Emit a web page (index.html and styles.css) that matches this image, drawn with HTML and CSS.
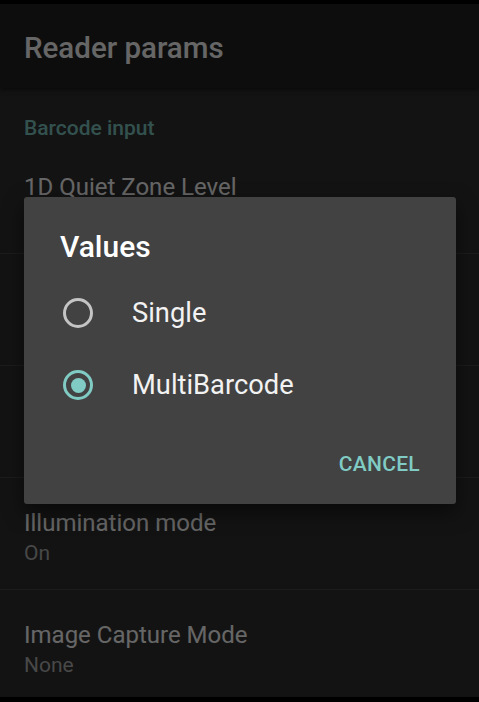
FILE: index.html
```html
<!DOCTYPE html>
<html>
<head>
<meta charset="utf-8">
<link rel="stylesheet" href="styles.css">
</head>
<body>
<div class="screen">
  <div class="statusbar"></div>
  <header class="appbar"><h1 class="appbar-title">Reader params</h1></header>
  <main class="content">
    <div class="category">Barcode input</div>
    <div class="pref">
      <div class="pref-title">1D Quiet Zone Level</div>
    </div>
    <div class="pref"></div>
    <div class="pref"></div>
    <div class="pref">
      <div class="pref-title">Illumination mode</div>
      <div class="pref-summary">On</div>
    </div>
    <div class="pref">
      <div class="pref-title">Image Capture Mode</div>
      <div class="pref-summary">None</div>
    </div>
  </main>
  <div class="navbar"></div>

  <div class="scrim">
    <div class="dialog">
      <div class="dialog-title">Values</div>
      <div class="options">
        <div class="option"><span class="radio"></span><span class="option-label">Single</span></div>
        <div class="option"><span class="radio checked"></span><span class="option-label">MultiBarcode</span></div>
      </div>
      <div class="actions"><span class="btn">CANCEL</span></div>
    </div>
  </div>
</div>
</body>
</html>
```
FILE: styles.css
```css
* { box-sizing: border-box; margin: 0; padding: 0; }
html, body { width: 479px; height: 702px; background: #000; overflow: hidden; }
body { font-family: Roboto, "Noto Sans", sans-serif; }

.screen {
  position: relative;
  width: 479px;
  height: 702px;
  display: flex;
  flex-direction: column;
  background: #303030;
}
.statusbar { height: 4px; background: #000; flex: none; }
.appbar {
  height: 84px;
  flex: none;
  background: #212121;
  padding: 26px 24px 0;
  box-shadow: 0 2px 4px rgba(0,0,0,0.5);
  position: relative;
  z-index: 1;
}
.appbar-title {
  font-size: 29.5px;
  line-height: 36px;
  font-weight: 500;
  color: #ffffff;
}
.content { flex: 1; overflow: hidden; background: #303030; }
.navbar { height: 5px; background: #000; flex: none; position: relative; z-index: 3; }

.category {
  padding: 27px 24px 0;
  height: 54px;
  font-size: 21px;
  line-height: 27px;
  font-weight: 500;
  color: #80cbc4;
}
.pref {
  height: 112px;
  padding: 29px 24px 0;
  border-bottom: 1px solid #484848;
}
.pref-title {
  font-size: 24px;
  line-height: 32px;
  color: #ffffff;
}
.pref-summary {
  font-size: 21px;
  line-height: 29px;
  color: #b3b3b3;
}

.scrim {
  position: absolute;
  left: 0; top: 0; right: 0; bottom: 0;
  background: rgba(0,0,0,0.6);
  z-index: 2;
}
.dialog {
  position: absolute;
  left: 24px;
  top: 197px;
  width: 432px;
  height: 307px;
  background: #424242;
  border-radius: 3px;
  box-shadow: 0 8px 20px rgba(0,0,0,0.5);
  padding-top: 32px;
  display: flex;
  flex-direction: column;
}
.dialog-title {
  padding: 0 36px;
  font-size: 30px;
  line-height: 36px;
  font-weight: 500;
  color: #ffffff;
}
.options { margin-top: 12px; }
.option {
  height: 72px;
  display: flex;
  align-items: center;
  padding-left: 39px;
}
.radio {
  width: 30px;
  height: 30px;
  border: 3px solid #c4c4c4;
  border-radius: 50%;
  display: flex;
  align-items: center;
  justify-content: center;
  flex: none;
}
.radio.checked { border-color: #80cbc4; }
.radio.checked::after {
  content: "";
  width: 15px;
  height: 15px;
  border-radius: 50%;
  background: #80cbc4;
}
.option-label {
  margin-left: 39px;
  font-size: 27.3px;
  color: #f2f2f2;
}
.actions {
  margin-top: 16px;
  display: flex;
  justify-content: flex-end;
  padding-right: 36px;
}
.btn {
  font-size: 21px;
  line-height: 54px;
  font-weight: 500;
  color: #80cbc4;
  letter-spacing: 0.3px;
}
```
